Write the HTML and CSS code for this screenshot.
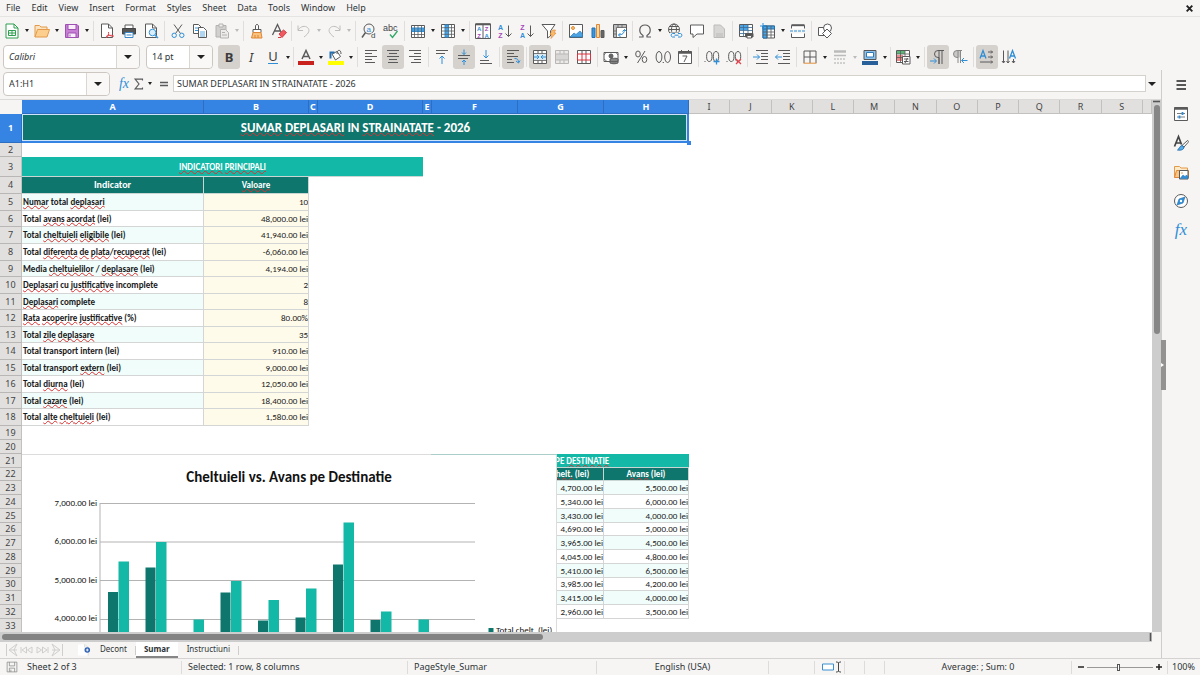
FILE: index.html
```html
<!DOCTYPE html>
<html lang="ro">
<head>
<meta charset="utf-8">
<title>Sumar deplasari</title>
<link rel="stylesheet" href="styles.css">
</head>
<body>
<nav class="menubar" aria-label="Menu">
<button>File</button><button>Edit</button><button>View</button><button>Insert</button><button>Format</button><button>Styles</button><button>Sheet</button><button>Data</button><button>Tools</button><button>Window</button><button>Help</button>
<button class="close" aria-label="Close document"><svg class="x" viewBox="0 0 8 8"><path d="M1.5 1.5l5 5M6.500 1.500l-5 5"/></svg></button>
</nav>

<div class="toolbar" role="toolbar" aria-label="Standard">
<button class="tb" aria-label="New"><svg class="i" viewBox="0 0 16 16"><path d="M2 1h8l4 4v10H2z" stroke="#2f9e4f" fill="#fff"/><path d="M10 1v4h4" stroke="#2f9e4f"/><path d="M4.500 7.500h7v5h-7zM4.500 10h7M8 7.500v5" stroke="#2f9e4f"/></svg></button><button class="dd" aria-label="New options"></button>
<button class="tb" aria-label="Open"><svg class="i" viewBox="0 0 16 16"><path d="M1 14V2.500h4.500L7 4h6v3" stroke="#e39a4a" fill="#fbe3c0"/><path d="M3.500 6.500h12L13 14H1z" stroke="#e39a4a" fill="#fdcf8f"/></svg></button><button class="dd" aria-label="Open options"></button>
<button class="tb" aria-label="Save"><svg class="i" viewBox="0 0 16 16"><path d="M1.500 1.500h11.500l1.500 1.500v11.500h-13z" stroke="#a04fb3" fill="#c77fd6"/><path d="M4 1.500h8v5H4zM4 10h8v4.500H4z" stroke="#a04fb3" fill="#f8effa"/><path d="M6 11.500v2" stroke="#a04fb3"/></svg></button><button class="dd" aria-label="Save options"></button>
<span class="sep"></span>
<button class="tb" aria-label="Export PDF"><svg class="i" viewBox="0 0 16 16"><path d="M2.500 1h7l4 4v9.500h-11z" fill="#fff"/><path d="M9.500 1v4h4"/><path d="M7 15c2-2 3-4 2.500-6M9 11c2 2 4 2.500 6 2M7 13.500c2-1 5-1.500 7-1" stroke="#e2454e"/></svg></button>
<button class="tb" aria-label="Print"><svg class="i" viewBox="0 0 16 16"><path d="M4 5V2h8v3" fill="#fff"/><path d="M1.500 5.500h13V11h-13z" fill="#555" stroke="#444"/><path d="M4 9.500h8v5H4z" fill="#fff" stroke="#3b87c8"/><path d="M5.500 12h5" stroke="#3b87c8"/></svg></button>
<button class="tb" aria-label="Print preview"><svg class="i" viewBox="0 0 16 16"><path d="M2.500 1h7l4 4v9.500h-11z" fill="#fff"/><path d="M9.500 1v4h4"/><circle cx="9.500" cy="9.500" r="3.300" stroke="#3b97dc" fill="#d9edfb"/><path d="M12 12l3 3" stroke="#3b97dc" stroke-width="1.500"/></svg></button>
<span class="sep"></span>
<button class="tb" aria-label="Cut"><svg class="i" viewBox="0 0 16 16"><path d="M4 1.500l6.500 9M12 1.500l-6.500 9"/><circle cx="4.200" cy="12.300" r="2.200" stroke="#2f8ed6"/><circle cx="11.800" cy="12.300" r="2.200" stroke="#2f8ed6"/></svg></button>
<button class="tb" aria-label="Copy"><svg class="i" viewBox="0 0 16 16"><path d="M1.500 1.500h5l2.500 2.500v6.500H1.500z" fill="#fff"/><path d="M3 5h4M3 7.500h4" stroke="#3b97dc"/><path d="M6.500 4.500h5l3 3v7h-8z" fill="#fff"/><path d="M8 9h5M8 11h5M8 13h5" stroke="#3b97dc" stroke-width=".8"/></svg></button>
<button class="tb" aria-label="Paste" disabled><svg class="i" viewBox="0 0 16 16"><path d="M2 2.500h10v11.500H2z" fill="#d2d0ce" stroke="#b4b2b0"/><path d="M5 1h4v3H5z" fill="#eee" stroke="#b4b2b0"/><path d="M6.500 6.500h5l3 3v5.500h-8z" fill="#ecebea" stroke="#b4b2b0"/><path d="M8 9.500h3M8 12h5" stroke="#b4b2b0"/></svg></button><button class="dd off" aria-label="Paste options" disabled></button>
<span class="sep"></span>
<button class="tb" aria-label="Clone formatting"><svg class="i" viewBox="0 0 16 16"><path d="M6.500 6.500V2.500q1.500-2.500 3 0v4" fill="#fff"/><path d="M4 6.500h8v3H4z" fill="#fff"/><path d="M4 9.500h8l1 5.500H2.500z" fill="#f9c27f" stroke="#df8636"/><path d="M6 12v3M9 12v3" stroke="#df8636"/></svg></button>
<button class="tb" aria-label="Clear formatting"><svg class="i" viewBox="0 0 16 16"><path d="M1.500 12L6.500 1.500 10 9M3.500 8h6" stroke-width="1.300"/><path d="M8 11l4.500-4 3 2.500-4.500 5z" fill="#ee5a5f" stroke="#d63b45"/><path d="M7 14.500h3" stroke="#d63b45"/></svg></button>
<span class="sep tight"></span>
<button class="tb" aria-label="Undo" disabled><svg class="i" viewBox="0 0 16 16"><path d="M2 2.500v5h5M2 7c3-4 7-4.500 9.500-2.500 2.500 2.500 2 5.500-3.500 9.500" stroke="#c0bebc"/></svg></button><button class="dd off" aria-label="Undo list" disabled></button>
<button class="tb" aria-label="Redo" disabled><svg class="i" viewBox="0 0 16 16"><path d="M14 2.500v5H9M14 7c-3-4-7-4.500-9.500-2.500C2 7 2.500 10 8 14" stroke="#c0bebc"/></svg></button><button class="dd off" aria-label="Redo list" disabled></button>
<span class="sep"></span>
<button class="tb" aria-label="Find and replace"><svg class="i" viewBox="0 0 16 16"><circle cx="8" cy="6" r="5"/><path d="M4.500 9.500L1 14.500" stroke-width="1.500"/><text x="5.500" y="8.500" class="t8 blue">a</text><text x="10" y="15" class="t8 halo">d</text></svg></button>
<button class="tb" aria-label="Spelling"><svg class="i" viewBox="0 0 16 16"><text x="0" y="7.500" class="t9">abc</text><path d="M7 11.500l2.500 3 5-6.500" stroke="#2fa866" stroke-width="1.300"/></svg></button>
<span class="sep"></span>
<button class="tb" aria-label="Rows"><svg class="i" viewBox="0 0 16 16"><path d="M1.500 2.500h13v12h-13z" fill="#fff"/><path d="M2 5h12v3.500H2z" fill="#4aa3e2" stroke="#2f8ed6"/><path d="M4.500 2.500v12M8 2.500v12M11.500 2.500v12M1.500 11.500h13" stroke-width=".8"/></svg></button><button class="dd" aria-label="Row options"></button>
<button class="tb" aria-label="Columns"><svg class="i" viewBox="0 0 16 16"><path d="M1.500 1.500h13v13h-13z" fill="#fff"/><path d="M5 2h3.500v12H5z" fill="#4aa3e2" stroke="#2f8ed6"/><path d="M11.500 1.500v13M1.500 4.700h13M1.500 8h13M1.500 11.300h13" stroke-width=".8"/></svg></button><button class="dd" aria-label="Column options"></button>
<span class="sep"></span>
<button class="tb" aria-label="Sort"><svg class="i" viewBox="0 0 16 16"><path d="M.5 1h15v14.500H.5zM8 1v14.500" fill="#fff"/><path d="M.5 1.300h15" stroke-width="2"/><text x="2" y="8" class="t6 blue">A</text><text x="2.300" y="15" class="t6 pur">Z</text><text x="9.800" y="8" class="t6 pur">Z</text><text x="9.500" y="15" class="t6 blue">A</text></svg></button>
<button class="tb" aria-label="Sort ascending"><svg class="i" viewBox="0 0 16 16"><text x="1" y="6.500" class="t7 blue">A</text><text x="1.300" y="15" class="t7 pur">Z</text><path d="M11.500 2.500v11M8.500 10.500l3 3 3-3"/></svg></button>
<button class="tb" aria-label="Sort descending"><svg class="i" viewBox="0 0 16 16"><text x="1.300" y="6.500" class="t7 pur">Z</text><text x="1" y="15" class="t7 blue">A</text><path d="M11.500 2.500v11M8.500 10.500l3 3 3-3"/></svg></button>
<button class="tb" aria-label="AutoFilter"><svg class="i" viewBox="0 0 16 16"><path d="M1 1.500h13L9.500 8v5l-3 2V8z" fill="#fff"/><path d="M11.500 7h3l-1.500 3h2L10 15.500l1-4H9z" fill="#fbbd6b" stroke="#e2903b" stroke-width=".7"/></svg></button>
<span class="sep"></span>
<button class="tb" aria-label="Insert image"><svg class="i" viewBox="0 0 16 16"><path d="M1.500 1.500h13v13h-13z" fill="#fff"/><circle cx="5" cy="5" r="1.500" fill="#fbbd6b" stroke="#e2903b"/><path d="M2 14l4-4 2 1.500 4-3.500 2.500 3v3z" fill="#4aa3e2" stroke="#2f78b8" stroke-width=".7"/></svg></button>
<button class="tb" aria-label="Insert chart"><svg class="i" viewBox="0 0 16 16"><path d="M2 5h3v9.500H2z" fill="#3b97dc" stroke="#246fb0"/><path d="M6.500 1.500h3v13h-3z" fill="#fcd9a5" stroke="#df8636"/><path d="M11 7.500h3v7h-3z" fill="#666"/></svg></button>
<button class="tb" aria-label="Insert pivot table"><svg class="i" viewBox="0 0 16 16"><path d="M1.500 1.500h13v13h-13z" fill="#fff"/><path d="M2 2h12v2.500H4.500V14H2z" fill="#bbb" stroke="none"/><path d="M4.500 14.500v-10h10M6 1.500v3M10 1.500v3M1.500 8h3M1.500 11h3" stroke-width=".8"/><path d="M6.500 12c4 0 6-2 6-5.500M10.500 8.500l2-2 2 2M8.500 10l-2 2 2 2" stroke="#2f8ed6"/></svg></button>
<span class="sep tight"></span>
<button class="tb" aria-label="Special character"><svg class="i" viewBox="0 0 16 16"><path d="M2 14h4v-1.500C1 9.500 2 2 8 2s7 7.500 2 10.500V14h4" stroke-width="1.200"/></svg></button><button class="dd" aria-label="Recent characters"></button>
<button class="tb" aria-label="Hyperlink"><svg class="i" viewBox="0 0 16 16"><circle cx="7" cy="6.500" r="5.500"/><ellipse cx="7" cy="6.500" rx="2.500" ry="5.500"/><path d="M1.500 6.500h11M2.500 3.500h9M2.500 9.500h9"/><path d="M3 9.500h13V15H3z" fill="#f6f5f4" stroke="none"/><path d="M8 10.500H5.500a1.800 1.800 0 000 3.500H8M11 10.500h2.500a1.800 1.800 0 010 3.500H11M7.500 12.200h4" stroke="#2f8ed6"/></svg></button>
<button class="tb" aria-label="Comment"><svg class="i" viewBox="0 0 16 16"><path d="M1.500 2h13v9H8l-4 3.500V11H1.500z" fill="#fff"/></svg></button>
<button class="tb" aria-label="Headers and footers" disabled><svg class="i" viewBox="0 0 16 16"><path d="M3 2h6.500l4 4v8.500H3z" fill="#d8d6d4" stroke="#bdbbb9"/><path d="M5 11h7M5 13h7" stroke="#bdbbb9"/></svg></button>
<span class="sep"></span>
<button class="tb" aria-label="Print area"><svg class="i" viewBox="0 0 16 16"><path d="M1.500 1.500h13v12h-13z" fill="#fff"/><path d="M2 2h8v5H2z" fill="#4aa3e2" stroke="none"/><path d="M1.500 4.500h13M1.500 7.500h13M1.500 10.500h13M5.500 1.500v12M10 1.500v12" stroke="#3a6b94" stroke-width=".8"/><path d="M7.500 10.500h7.500V14H7.500z" fill="#555"/><path d="M9 12.500h4.500V15H9z" fill="#fff"/></svg></button>
<button class="tb" aria-label="Freeze panes"><svg class="i" viewBox="0 0 16 16"><path d="M3 3h11.500v12H3z" fill="#fff"/><path d="M3 3h11.500v3H3zM3 3h4v12H3z" fill="#4aa3e2" stroke="#2370ac"/><path d="M3 9h11.500M3 12h11.500M7 3v12M11 3v12" stroke-width=".8"/><path d="M3 0v6M0 3h6" stroke="#2f8ed6"/></svg></button><button class="dd" aria-label="Freeze options"></button>
<button class="tb" aria-label="Split window"><svg class="i" viewBox="0 0 16 16"><path d="M1.500 5.500v-3h13v3M1.500 10.500v4h13v-4" fill="#fff"/><path d="M1.500 2.200h13" stroke-width="2"/><path d="M0 8h16" stroke="#2f8ed6" stroke-dasharray="3 1"/></svg></button>
<span class="sep"></span>
<button class="tb" aria-label="Draw functions"><svg class="i" viewBox="0 0 16 16"><path d="M1.500 4.500h8v8h-8z" fill="#fff"/><circle cx="10.500" cy="5" r="4" fill="#fff"/><path d="M10 6l4.500 4.500L10 15l-4.500-4.500z" fill="#fff"/></svg></button>
</div>

<div class="toolbar format" role="toolbar" aria-label="Formatting">
<div class="combo font"><input aria-label="Font name" value="Calibri"><button aria-label="Font list"></button></div>
<div class="combo size"><input aria-label="Font size" value="14 pt"><button aria-label="Size list"></button></div>
<button class="tb on" aria-label="Bold"><span class="g b">B</span></button>
<button class="tb" aria-label="Italic"><span class="g it">I</span></button>
<button class="tb" aria-label="Underline"><span class="g u">U</span></button><button class="dd" aria-label="Underline options"></button>
<span class="sep tight"></span>
<button class="tb" aria-label="Font color"><svg class="i" viewBox="0 0 16 16"><path d="M4 10L8 1.500 12 10M5.500 7.500h5" stroke-width="1.500"/><path d="M0 12h16v4H0z" fill="#c9211e" stroke="none"/></svg></button><button class="dd" aria-label="Font color options"></button>
<button class="tb" aria-label="Background color"><svg class="i" viewBox="0 0 16 16"><path d="M4 5l5-2.500 3.500 5-5 3.500z" fill="#fff"/><path d="M9 5c0-5 4-5 4 0"/><path d="M2.500 9.500V3.500h4" stroke="#246fb0" stroke-width="2"/><path d="M0 12h16v4H0z" fill="#ff0" stroke="none"/></svg></button><button class="dd" aria-label="Background color options"></button>
<span class="sep"></span>
<button class="tb" aria-label="Align left"><svg class="i" viewBox="0 0 16 16"><path d="M2 1.500h12M2 4.500h7M2 7.500h12M2 10.500h7M2 13.500h10"/></svg></button>
<button class="tb on" aria-label="Center"><svg class="i" viewBox="0 0 16 16"><path d="M2 1.500h12M4 4.500h8M2 7.500h12M4 10.500h8M3 13.500h10"/></svg></button>
<button class="tb" aria-label="Align right"><svg class="i" viewBox="0 0 16 16"><path d="M2 1.500h12M7 4.500h7M2 7.500h12M7 10.500h7M4 13.500h10"/></svg></button>
<span class="sep"></span>
<button class="tb" aria-label="Align top"><svg class="i" viewBox="0 0 16 16"><path d="M2 1.500h12M2 4.500h9"/><path d="M8 15V7M5.500 9.500L8 7l2.500 2.500" stroke="#2f8ed6"/></svg></button>
<button class="tb on" aria-label="Center vertically"><svg class="i" viewBox="0 0 16 16"><path d="M2 6.500h12M2 9.500h10"/><path d="M8 .5v5M6 3.500l2 2 2-2M8 16v-5M6 13l2-2 2 2" stroke="#2f8ed6"/></svg></button>
<button class="tb" aria-label="Align bottom"><svg class="i" viewBox="0 0 16 16"><path d="M2 11.500h9M2 14.500h12"/><path d="M8 1v8M5.500 6.500L8 9l2.500-2.500" stroke="#2f8ed6"/></svg></button>
<span class="sep"></span>
<button class="tb on" aria-label="Wrap text"><svg class="i" viewBox="0 0 16 16"><path d="M2 1.500h12M2 4.500h7M2 7.500h11M2 10.500h5M2 13.500h7"/><path d="M9.500 9.500c3 0 4 1 4 4M11 12l2.500 2 1.500-2.500" stroke="#2f8ed6"/></svg></button>
<span class="sep"></span>
<button class="tb on" aria-label="Merge and center"><svg class="i" viewBox="0 0 16 16"><path d="M1.500 1.500h13v13h-13z" fill="#fff"/><path d="M1.500 4.700h13M1.500 11.300h13M6 1.500v3M10 1.500v3M6 11.500v3M10 11.500v3"/><path d="M2 5.500h12v5H2z" fill="#d5eafa" stroke="none"/><path d="M2 8h4.500M5 6l2 2-2 2M14 8H9.500M11 6L9 8l2 2" stroke="#2f8ed6"/></svg></button>
<button class="tb" aria-label="Merge cells" disabled><svg class="i" viewBox="0 0 16 16"><path d="M1.500 1.500h13v13h-13z" fill="#eceae8" stroke="#b9b7b5"/><path d="M1.500 5h13v6h-13z" fill="#d8d6d4" stroke="#b9b7b5"/><path d="M6 1.500V5M10 1.500V5M6 11v3.500M10 11v3.500" stroke="#b9b7b5"/></svg></button>
<button class="tb" aria-label="Unmerge cells"><svg class="i" viewBox="0 0 16 16"><path d="M1.500 1.500h13v13h-13z" fill="#fff"/><path d="M6 1.500V5M10 1.500V5M6 11v3.500M10 11v3.500"/><path d="M1.500 5h13v6h-13zM6 5v6M10 5v6" fill="#fff" stroke="#d9333f"/></svg></button>
<span class="sep"></span>
<button class="tb" aria-label="Currency"><svg class="i" viewBox="0 0 16 16"><path d="M1 12.500v-9h14v9z" fill="#fff"/><circle cx="8" cy="7" r="2" fill="#666"/><path d="M1 10l3 2.500M1 6l2-2.500M13 3.500L15 6" stroke-width=".8"/><path d="M7 10c2-1 8-1 8 0v4c-2 1-6 1-8 0z" fill="#888"/><path d="M7 12c2 1 6 1 8 0"/></svg></button><button class="dd" aria-label="Currency options"></button>
<button class="tb" aria-label="Percent"><svg class="i" viewBox="0 0 16 16"><ellipse cx="5" cy="5" rx="2.300" ry="3"/><ellipse cx="11.500" cy="10.500" rx="2.300" ry="3"/><path d="M12 2L4.500 14"/></svg></button>
<button class="tb" aria-label="Number"><svg class="i" viewBox="0 0 16 16"><ellipse cx="4" cy="8" rx="2.900" ry="5.500"/><ellipse cx="12.600" cy="8" rx="2.900" ry="5.500"/><path d="M7.700 13.500h1.200"/></svg></button>
<button class="tb" aria-label="Date"><svg class="i" viewBox="0 0 16 16"><path d="M1.500 2.500h13v12h-13z" fill="#fff"/><path d="M1.500 3.500h13" stroke-width="2.500"/><path d="M4.500 1v2M11.500 1v2M5.500 7H10l-3 6"/></svg></button>
<span class="sep"></span>
<button class="tb" aria-label="Add decimal place"><svg class="i" viewBox="0 0 16 16"><path d="M.5 12.500h1"/><ellipse cx="5.300" cy="7.500" rx="2.700" ry="5"/><ellipse cx="12" cy="7.500" rx="2.700" ry="5"/><path d="M12.500 9.500v6M9.500 12.500h6" stroke="#2f8ed6" stroke-width="1.300"/></svg></button>
<button class="tb" aria-label="Delete decimal place"><svg class="i" viewBox="0 0 16 16"><path d="M.5 12.500h1"/><ellipse cx="5.300" cy="7.500" rx="2.700" ry="5"/><ellipse cx="12" cy="7.500" rx="2.700" ry="5"/><path d="M10 10l5 5M15 10l-5 5" stroke="#e2454e" stroke-width="1.300"/></svg></button>
<span class="sep"></span>
<button class="tb" aria-label="Increase indent"><svg class="i" viewBox="0 0 16 16"><path d="M3 1.500h12M8 4.500h7M8 7.500h7M8 10.500h7M3 14.500h12"/><path d="M0 8h6.500M4 5.500L6.500 8 4 10.500" stroke="#2f8ed6"/></svg></button>
<button class="tb" aria-label="Decrease indent"><svg class="i" viewBox="0 0 16 16"><path d="M3 1.500h12M8 4.500h7M8 7.500h7M8 10.500h7M3 14.500h12"/><path d="M7 8H.5M3 5.500L.5 8 3 10.500" stroke="#2f8ed6"/></svg></button>
<span class="sep"></span>
<button class="tb" aria-label="Borders"><svg class="i" viewBox="0 0 16 16"><path d="M2 14V2h12v12M8 2v12M2 8h12"/><path d="M1.500 14.200h13" stroke="#e2903b"/></svg></button><button class="dd" aria-label="Border options"></button>
<button class="tb" aria-label="Border style" disabled><svg class="i" viewBox="0 0 16 16"><path d="M2 2.500h12" stroke="#bbb" stroke-width="2.500"/><path d="M2 6.500h12" stroke="#bbb" stroke-width="1.500"/><path d="M2 10h12M2 14h12" stroke="#aaa" stroke-dasharray="2 1"/></svg></button><button class="dd off" aria-label="Border style options" disabled></button>
<button class="tb" aria-label="Border color"><svg class="i" viewBox="0 0 16 16"><path d="M2 1.500h12v9H2z" fill="#8ec2eb" stroke="#555"/><path d="M4.500 3.500h7V8h-7z" fill="#fff" stroke="#2f78b8"/><path d="M0 12h16v4H0z" fill="#2a6099" stroke="none"/></svg></button><button class="dd" aria-label="Border color options"></button>
<span class="sep tight"></span>
<button class="tb" aria-label="Conditional formatting"><svg class="i" viewBox="0 0 16 16"><path d="M1.500 1.500h13v12h-13z" fill="#fff"/><path d="M2 2h8v3H2z" fill="#59b87a" stroke="none"/><path d="M2 6h6v6H2z" fill="#ef8a8c" stroke="none"/><path d="M1.500 5h13M1.500 8.500h13M5.500 1.500v12M10 1.500v12" stroke-width=".8"/><path d="M7.500 7.500h7.500V15H7.500z" fill="#fff"/><path d="M9 10h4.500M9 12.500h4.500M12.500 9l-2.500 5"/></svg></button><button class="dd" aria-label="Conditional options"></button>
<span class="sep"></span>
<button class="tb on" aria-label="Left to right"><svg class="i" viewBox="0 0 16 16"><path d="M14 1.500H8a3.500 3.500 0 000 7h1V15M9 1.500V15M12 1.500V15"/><path d="M0 12h6M4 9.500L6.500 12 4 14.500" stroke="#2f8ed6"/></svg></button>
<button class="tb" aria-label="Right to left"><svg class="i" viewBox="0 0 16 16"><path d="M9 1.500H5a3 3 0 000 7h1l3 0z" fill="#c9c7c5" stroke="none"/><path d="M10 1.500H5a3 3 0 000 7h1M6 1.500V14M8.500 1.500V14" stroke="#888"/><path d="M15.500 11.500H10M12 9l-2.500 2.500L12 14" stroke="#2f8ed6"/></svg></button>
<span class="sep"></span>
<button class="tb on" aria-label="Horizontal text"><svg class="i" viewBox="0 0 16 16"><path d="M1 9.500L4 1.500l3 8M2 7h4" stroke="#2f8ed6" stroke-width="1.300"/><path d="M9 3h4.500M12 1.500L13.500 3 12 4.500M9 8h4.500M12 6.500L13.500 8 12 9.500M1 13h12.500M12 11.500l1.500 1.500-1.500 1.500"/></svg></button>
<button class="tb" aria-label="Vertical text"><svg class="i" viewBox="0 0 16 16"><path d="M8.500 9.500l3-8 3 8M9.500 7h4" stroke="#2f8ed6" stroke-width="1.300"/><path d="M2.500 1.500v12.500M1 12l1.500 2L4 12M7 1.500v12.500M5.500 12L7 14l1.500-2M12.500 10v4M11 12l1.500 2 1.500-2"/></svg></button>
</div>

<div class="work">
<main class="main">
<div class="formula">
<div class="combo name"><input aria-label="Name box" value="A1:H1"><button aria-label="Name list"></button></div>
<button class="fx" aria-label="Function wizard">fx</button>
<button class="sum" aria-label="Select function"><svg class="i" viewBox="0 0 16 16"><path d="M12 4V2.500H3.500L8 8l-4.500 5.500H12V12" stroke-width="1.300"/></svg></button><button class="dd" aria-label="Function list"></button>
<button class="eq" aria-label="Formula"><svg class="i" viewBox="0 0 16 16"><path d="M4 6.500h8M4 9.500h8" stroke-width="1.600"/></svg></button>
<input class="line" aria-label="Input line" value="SUMAR DEPLASARI IN STRAINATATE - 2026">
<button class="dd big" aria-label="Expand formula bar"></button>
</div>

<div class="gridwrap">
<div class="cells">
<table class="sheet">
<colgroup><col class="rh"><col class="ca"><col class="cb"><col class="cc"><col class="cb"><col class="cc"><col class="cf"><col class="cf"><col class="ch"><col><col><col><col><col><col><col><col><col><col><col><col class="cc"></colgroup>
<thead><tr><th class="corner"></th><th class="s">A</th><th class="s">B</th><th class="s">C</th><th class="s">D</th><th class="s">E</th><th class="s">F</th><th class="s">G</th><th class="s">H</th><th>I</th><th>J</th><th>K</th><th>L</th><th>M</th><th>N</th><th>O</th><th>P</th><th>Q</th><th>R</th><th>S</th><th></th></tr></thead>
<tbody>
<tr class="r29"><th class="s">1</th><td class="title" colspan="8"><span class="w">SUMAR</span> <span class="w">DEPLASARI</span> IN <span class="w">STRAINATATE</span> - 2026</td><td colspan="12"></td></tr>
<tr class="r14"><th>2</th><td colspan="20"></td></tr>
<tr class="r20"><th>3</th><td class="band" colspan="4"><span class="w">INDICATORI</span> <span class="w">PRINCIPALI</span></td><td colspan="16"></td></tr>
<tr class="r17"><th>4</th><td class="head big">Indicator</td><td class="head"><span class="w">Valoare</span></td><td colspan="18"></td></tr>
<tr class="r17 alt"><th>5</th><td class="k"><span class="w">Numar</span> total <span class="w">deplasari</span></td><td class="v">10</td><td colspan="18"></td></tr>
<tr class="r16"><th>6</th><td class="k">Total <span class="w">avans</span> <span class="w">acordat</span> (lei)</td><td class="v">48,000.00 lei</td><td colspan="18"></td></tr>
<tr class="r17 alt"><th>7</th><td class="k">Total <span class="w">cheltuieli</span> <span class="w">eligibile</span> (lei)</td><td class="v">41,940.00 lei</td><td colspan="18"></td></tr>
<tr class="r17"><th>8</th><td class="k">Total <span class="w">diferenta</span> <span class="w">de</span> <span class="w">plata</span>/<span class="w">recuperat</span> (lei)</td><td class="v">-6,060.00 lei</td><td colspan="18"></td></tr>
<tr class="r16 alt"><th>9</th><td class="k">Media <span class="w">cheltuielilor</span> / <span class="w">deplasare</span> (lei)</td><td class="v">4,194.00 lei</td><td colspan="18"></td></tr>
<tr class="r17"><th>10</th><td class="k"><span class="w">Deplasari</span> cu <span class="w">justificative</span> incomplete</td><td class="v">2</td><td colspan="18"></td></tr>
<tr class="r16 alt"><th>11</th><td class="k"><span class="w">Deplasari</span> complete</td><td class="v">8</td><td colspan="18"></td></tr>
<tr class="r17"><th>12</th><td class="k"><span class="w">Rata</span> <span class="w">acoperire</span> <span class="w">justificative</span> (%)</td><td class="v">80.00%</td><td colspan="18"></td></tr>
<tr class="r16 alt"><th>13</th><td class="k">Total <span class="w">zile</span> <span class="w">deplasare</span></td><td class="v">35</td><td colspan="18"></td></tr>
<tr class="r17"><th>14</th><td class="k">Total transport intern (lei)</td><td class="v">910.00 lei</td><td colspan="18"></td></tr>
<tr class="r16 alt"><th>15</th><td class="k">Total transport <span class="w">extern</span> (lei)</td><td class="v">9,000.00 lei</td><td colspan="18"></td></tr>
<tr class="r17"><th>16</th><td class="k">Total <span class="w">diurna</span> (lei)</td><td class="v">12,050.00 lei</td><td colspan="18"></td></tr>
<tr class="r16 alt"><th>17</th><td class="k">Total <span class="w">cazare</span> (lei)</td><td class="v">18,400.00 lei</td><td colspan="18"></td></tr>
<tr class="r17"><th>18</th><td class="k">Total <span class="w">alte</span> <span class="w">cheltuieli</span> (lei)</td><td class="v">1,580.00 lei</td><td colspan="18"></td></tr>
<tr class="r14"><th>19</th><td colspan="20"></td></tr>
<tr class="r14"><th>20</th><td colspan="20"></td></tr>
<tr class="r14"><th>21</th><td colspan="5"></td><td class="band" colspan="3">CHELTUIELI PE <span class="w">DESTINATIE</span></td><td colspan="12"></td></tr>
<tr class="r13"><th>22</th><td colspan="5"></td><td class="head"></td><td class="head">Total <span class="w">chelt.</span> (lei)</td><td class="head"><span class="w">Avans</span> (lei)</td><td colspan="12"></td></tr>
<tr class="r14 alt"><th>23</th><td colspan="5"></td><td class="n"></td><td class="n">4,700.00 lei</td><td class="n">5,500.00 lei</td><td colspan="12"></td></tr>
<tr class="r14"><th>24</th><td colspan="5"></td><td class="n"></td><td class="n">5,340.00 lei</td><td class="n">6,000.00 lei</td><td colspan="12"></td></tr>
<tr class="r14 alt"><th>25</th><td colspan="5"></td><td class="n"></td><td class="n">3,430.00 lei</td><td class="n">4,000.00 lei</td><td colspan="12"></td></tr>
<tr class="r13"><th>26</th><td colspan="5"></td><td class="n"></td><td class="n">4,690.00 lei</td><td class="n">5,000.00 lei</td><td colspan="12"></td></tr>
<tr class="r14 alt"><th>27</th><td colspan="5"></td><td class="n"></td><td class="n">3,965.00 lei</td><td class="n">4,500.00 lei</td><td colspan="12"></td></tr>
<tr class="r14"><th>28</th><td colspan="5"></td><td class="n"></td><td class="n">4,045.00 lei</td><td class="n">4,800.00 lei</td><td colspan="12"></td></tr>
<tr class="r14 alt"><th>29</th><td colspan="5"></td><td class="n"></td><td class="n">5,410.00 lei</td><td class="n">6,500.00 lei</td><td colspan="12"></td></tr>
<tr class="r13"><th>30</th><td colspan="5"></td><td class="n"></td><td class="n">3,985.00 lei</td><td class="n">4,200.00 lei</td><td colspan="12"></td></tr>
<tr class="r14 alt"><th>31</th><td colspan="5"></td><td class="n"></td><td class="n">3,415.00 lei</td><td class="n">4,000.00 lei</td><td colspan="12"></td></tr>
<tr class="r14"><th>32</th><td colspan="5"></td><td class="n"></td><td class="n">2,960.00 lei</td><td class="n">3,500.00 lei</td><td colspan="12"></td></tr>
<tr class="r14"><th>33</th><td colspan="20"></td></tr>
</tbody>
</table>
<svg class="chart" viewBox="0 0 535 180" role="img" aria-label="Cheltuieli vs. Avans pe Destinatie">
<path d="M0 0h535v180H0z" fill="#fff"/><path d="M0 .5h534.500V180" fill="none" stroke="#dcdcdc"/><path d="M409 .5h126" stroke="#a9cfc8"/>
<text class="ct" x="267" y="28">Cheltuieli vs. Avans pe Destinatie</text>
<path d="M78 49.500h375M78 88h375M78 126.500h375M78 165.500h375M78 49v131" fill="none" stroke="#b3b3b3"/>
<g class="ax"><text x="75" y="52">7,000.00 lei</text><text x="75" y="90">6,000.00 lei</text><text x="75" y="129">5,000.00 lei</text><text x="75" y="167">4,000.00 lei</text></g>
<path fill="#0f766e" d="M86 138h10v42H86zM123.500 113.500h10V180h-10zM198.500 138.500h10V180h-10zM236 166.500h10V180h-10zM273.500 163.500h10V180h-10zM311 110.500h10V180h-10zM348.500 166h10V180h-10z"/>
<path fill="#14b8a6" d="M96.500 107.500h10.500V180H96.500zM134 88h10.500v92H134zM171.500 165.500H182V180h-10.500zM209 127h10.500v53H209zM246.500 146H257v34h-10.500zM284 134.500h10.500V180H284zM321.500 68.500H332V180h-10.500zM359 157.500h10.500V180H359zM396.500 165.500H407V180h-10.500z"/>
<path fill="#0f766e" d="M466.500 174h5v5h-5z"/><text class="lg" x="474" y="179">Total chelt. (lei)</text>
</svg>
</div>
<div class="vscroll"><span class="tick"></span><span class="thumb"></span></div>
</div>
<div class="hscroll"><span class="thumb"></span><span class="tick"></span></div>

<div class="tabs">
<div class="tabnav">
<button aria-label="First sheet" disabled><svg viewBox="0 0 14 14"><path d="M1.500 1v12M12 1L4 7l8 6-3-6zM5 7h7"/></svg></button>
<button aria-label="Previous sheet" disabled><svg viewBox="0 0 14 14"><path d="M6.500 4L2 7l4.500 3zM12 4L7.500 7l4.500 3zM1 4v6"/></svg></button>
<button aria-label="Next sheet" disabled><svg viewBox="0 0 14 14"><path d="M2 4l4.500 3L2 10zM7.500 4L12 7l-4.500 3zM13 4v6"/></svg></button>
<button aria-label="Last sheet" disabled><svg viewBox="0 0 14 14"><path d="M12.500 1v12M2 1l8 6-8 6 3-6zM2 7h7"/></svg></button>
</div>
<button class="add" aria-label="Add sheet"><svg viewBox="0 0 14 14"><path d="M0 1h7l4 3v9H0z" fill="#fff"/><path d="M7 1l4 3v9M7 1v3h4" fill="none" stroke="#ddd"/><circle cx="10" cy="7" r="3" fill="#2f62b5"/><path d="M10 5.500v3M8.500 7h3" stroke="#fff"/></svg></button>
<button class="tab">Decont</button><button class="tab cur">Sumar</button><button class="tab">Instructiuni</button>
</div>
</main>

<aside class="side">
<button aria-label="Sidebar settings"><svg class="i" viewBox="0 0 16 16"><path d="M3.500 4h9.500M3.500 8h9.500M3.500 12h9.500" stroke="#222" stroke-width="1.400"/></svg></button>
<button aria-label="Properties"><svg class="i" viewBox="0 0 16 16"><path d="M1.500 1.500h13v13h-13z" fill="#fff"/><path d="M1.500 2.500h13" stroke-width="2.500"/><path d="M4 7.500h8M4 11h8" stroke-width=".8"/><path d="M9.500 6v3M6.500 9.500v3" stroke="#2f8ed6" stroke-width="1.800"/></svg></button>
<button aria-label="Styles"><svg class="i" viewBox="0 0 16 16"><path d="M1.500 11.500L5.500 1.500l3 8M3 8h5" stroke="#444" stroke-width="1.700"/><path d="M14.500 5.500c1 0 1 1 .5 2l-4 4.500-2-1.500z" fill="#fff"/><path d="M9 10.500l2 1.500c0 3-4 3.500-6.500 3 2-1 2-4 4.500-4.500z" fill="#58aee8" stroke="#246fb0"/></svg></button>
<button aria-label="Gallery"><svg class="i" viewBox="0 0 16 16"><path d="M1.500 13.500v-11h5L8 4h6.500v3" fill="#fdeacb" stroke="#e39a4a"/><path d="M1.500 13.500l2-7h12v7z" fill="#fbc583" stroke="#df8636"/><path d="M6.500 6.500h8.500V15H6.500z" fill="#fff"/><path d="M7 14.500l3-3.500 2 1.500 1.500-1.500 1.500 1.500v2z" fill="#2f8ed6" stroke="#246fb0" stroke-width=".5"/><circle cx="9" cy="9" r=".8" fill="#e2903b" stroke="none"/></svg></button>
<button aria-label="Navigator"><svg class="i" viewBox="0 0 16 16"><circle cx="8" cy="8" r="6.500" fill="#fff"/><path d="M12 4l-2 6-6 2 2-6z" fill="#2f8ed6" stroke="#246fb0" stroke-width=".6"/><circle cx="8" cy="8" r="1.200" fill="#fff" stroke="none"/></svg></button>
<button class="fx" aria-label="Functions">fx</button>
<button class="grip" aria-label="Hide sidebar"></button>
</aside>
</div>

<footer class="status">
<span class="doc"><svg class="i sm" viewBox="0 0 16 16"><path d="M1.500 1.500h13v13h-13zM4.500 1.500v5h7v-5M4.500 14.500v-5h7v5M6.500 11.500v3" stroke="#888"/></svg>Sheet 2 of 3</span>
<span>Selected: 1 row, 8 columns</span><span>PageStyle_Sumar</span><span class="c">English (USA)</span><span></span>
<span class="mode"><svg viewBox="0 0 22 12"><path d="M1.500 3h11v6h-11z" fill="#fff" stroke="#3b8fd0"/><path d="M15 1h1.500l1 1 1-1H20M17.500 2v8M15 11h1.500l1-1 1 1H20" fill="none" stroke="#444"/></svg></span>
<span></span><span></span><span class="c">Average: ; Sum: 0</span>
<span class="zoom"><button aria-label="Zoom out"><svg viewBox="0 0 8 8"><path d="M1 4h6"/></svg></button><input type="range" aria-label="Zoom" min="0" max="100" value="48"><button aria-label="Zoom in"><svg viewBox="0 0 8 8"><path d="M1 4h6M4 1v6"/></svg></button></span>
<span class="pct">100%</span>
</footer>
</body>
</html>
```

FILE: styles.css
```css
* { box-sizing: border-box; }
html, body { height: 100%; }
body {
  margin: 0; display: flex; flex-direction: column; overflow: hidden;
  background: #f6f5f4; color: #2e3436;
  font: 9px/12px "Noto Sans", sans-serif;
}
button, input { font: inherit; color: inherit; background: none; border: 0; margin: 0; padding: 0; }
svg { display: block; }

.menubar { display: flex; align-items: center; gap: 11px; height: 17px; padding: 0 6px; border-bottom: 1px solid #e6e4e2; }
.close { margin-left: auto; }
.x { width: 9px; height: 9px; fill: none; stroke: #222; stroke-width: 1.7; }

.toolbar { display: flex; align-items: center; height: 27px; padding-left: 1px; }
.toolbar.format { height: 26px; padding-left: 3px; }
.tb { display: flex; align-items: center; justify-content: center; flex: none; width: 22px; height: 24px; border-radius: 3px; }
.tb.on { background: #d5d1cd; }
.i { width: 16px; height: 16px; overflow: visible; fill: none; stroke: #5a5a5a; stroke-width: 1; }
.i text { stroke: none; fill: #444; font-family: "Liberation Sans", sans-serif; }
.i text.blue { fill: #2f8ed6; }
.i text.pur { fill: #a447b8; }
.i text.halo { stroke: #f6f5f4; stroke-width: 2; paint-order: stroke; }
.t9 { font-size: 9px; }
.t8 { font-size: 8px; }
.t7 { font-size: 7px; font-weight: 700; }
.t6 { font-size: 6px; font-weight: 700; }
.dd { display: flex; align-items: center; justify-content: center; flex: none; width: 8px; height: 22px; }
.dd::after, .combo button::after { content: ""; border: 3px solid transparent; border-top: 3px solid #222; border-bottom: 0; }
.dd::after { border-width: 3px 2px 0; }
.dd.off::after { border-top-color: #bbb; }
.dd.big::after, .combo button::after { border-width: 4px 4px 0; }
.sep { flex: none; width: 1px; height: 20px; margin: 0 2px; background: #e0dedc; }
.sep.tight { margin: 0 1px; }
.g { font-size: 13px; line-height: 16px; color: #3c3c3c; }
.g.b { font-weight: 700; }
.g.it { font-style: italic; }
.g.u { border-bottom: 1px solid #2f8ed6; line-height: 13px; }

.combo { display: flex; flex: none; height: 24px; background: #fff; border: 1px solid #cdc7c2; border-radius: 4px; }
.combo input { flex: 1; min-width: 0; padding-left: 5px; }
.combo button { display: flex; align-items: center; justify-content: center; width: 23px; border-left: 1px solid #dad6d2; background: #f9f8f7; border-radius: 0 4px 4px 0; }
.font { width: 137px; margin-right: 6px; }
.font input { font-style: italic; }
.size { width: 67px; margin-right: 5px; }
.name { width: 107px; margin-right: 6px; }

.work { display: flex; flex: 1; min-height: 0; }
.main { display: flex; flex-direction: column; flex: 1; min-width: 0; }
.formula { display: flex; align-items: center; height: 30px; padding: 0 5px 2px 3px; border-bottom: 1px solid #dcdad8; }
.fx { width: 16px; font: italic 14px/16px "Liberation Serif", serif; color: #2f8ed6; }
.sum { width: 14px; }
.sum .i { width: 14px; }
.eq { margin: 0 1px 0 2px; }
.line { flex: 1; min-width: 0; height: 17px; padding-left: 3px; margin-right: 2px; background: #fff; border: 1px solid #d5d1cd; }

.gridwrap { display: flex; flex: 1; min-height: 0; }
.cells { position: relative; flex: 1; min-width: 0; overflow: hidden; background: #fff; }
.sheet { width: 100%; table-layout: fixed; border-collapse: separate; border-spacing: 0; color: #1a1a1a; font: 9px/10px Carlito, Lato, sans-serif; }
.sheet th, .sheet td { padding: 0; white-space: nowrap; overflow: hidden; }
.sheet th { background: #e1e0df; color: #444; border-right: 1px solid #c3c1bf; border-bottom: 1px solid #c3c1bf; font: 9px/12px "Noto Sans", sans-serif; }
.sheet thead th { height: 14px; }
.sheet tbody th { border-bottom-color: #b9b7b5; }
.sheet th.s { background: #3584e4; color: #fff; font-weight: 700; border-color: #2c6fc2; }
.sheet th.corner { background: #f6f5f4; border-color: #f6f5f4; }
.rh { width: 22px; }
.ca { width: 182px; }
.cb { width: 105px; }
.cc { width: 9px; }
.cf { width: 86px; }
.ch { width: 85px; }
.r29 { height: 29px; }
.r20 { height: 20px; }
.r17 { height: 17px; }
.r16 { height: 16px; }
.r14 { height: 14px; }
.r13 { height: 13px; }
.sheet td.title { position: relative; overflow: visible; background: #0f766e; color: #fff; font-size: 13px; font-weight: 700; line-height: 14px; padding-bottom: 2px; text-align: center; }
.title::before { content: ""; position: absolute; inset: 0; border: 2px solid #3584e4; border-width: 0 2px 2px 0; box-shadow: inset 0 0 0 1px #cfe3fa; }
.title::after { content: ""; position: absolute; right: -2px; bottom: -2px; width: 4px; height: 4px; background: #3584e4; }
.band, .head { color: #fff; font-weight: 700; text-align: center; }
.band { background: #14b8a6; border-bottom: 1px solid #c9d6d4; }
.head { background: #0f766e; border-right: 1px solid #c9d6d4; border-bottom: 1px solid #c9d6d4; }
.head.big { font-size: 10px; }
.k, .v, .n { border-right: 1px solid #d3d6d5; border-bottom: 1px solid #d3d6d5; }
.k { font-weight: 700; }
.sheet td.k { padding-left: 1px; }
.v, .n { text-align: right; }
.alt .k, .alt .n { background: #f0fdfa; }
.sheet .v { background: #fffbeb; }
.w { text-decoration: underline wavy #dc3030 1px; text-underline-offset: 0; text-decoration-skip-ink: none; }
.chart { position: absolute; left: 22px; top: 354px; width: 535px; height: 180px; }
.chart text { font-family: Carlito, Lato, sans-serif; fill: #111; }
.chart .ct { font-size: 15px; font-weight: 700; text-anchor: middle; }
.chart .ax { font-size: 9px; text-anchor: end; }
.chart .lg { font-size: 9px; }

.vscroll { display: flex; flex-direction: column; align-items: center; width: 9px; background: #cdcdcd; }
.vscroll .tick { width: 7px; height: 3px; background: #555; border: 1px solid #aaa; border-width: 1px 0; }
.vscroll .thumb { width: 6px; height: 43%; margin-top: 2px; border-radius: 3px; background: #868686; }
.hscroll { display: flex; align-items: center; justify-content: space-between; height: 10px; margin-right: 9px; padding-left: 2px; background: #cdcdcd; }
.hscroll .thumb { width: 47%; height: 6px; border-radius: 3px; background: #828282; }
.hscroll .tick { width: 3px; height: 8px; background: #555; border: 1px solid #aaa; border-width: 0 1px; }

.tabs { display: flex; height: 16px; font-size: 8px; }
.tabnav { display: flex; align-items: center; width: 78px; padding-left: 5px; gap: 1px; }
.tabnav svg, .add svg { width: 14px; height: 14px; fill: none; stroke: #d0cecc; stroke-width: 1; }
.add { width: 13px; }
.add svg { width: 13px; stroke: none; }
.tab { padding: 0 9px 2px; background: linear-gradient(#cfcdcb, #cfcdcb) right / 1px 9px no-repeat; line-height: 12px; }
.tab.cur { padding: 0 8px; background: #fff; font-weight: 700; border-bottom: 2px solid #868686; }

.side { position: relative; display: flex; flex-direction: column; align-items: center; gap: 13px; width: 39px; padding: 7px 0 0; border-left: 1px solid #cfcdcb; }
.side .fx { font-size: 17px; }
.side .grip { position: absolute; left: -1px; top: 46%; width: 5px; height: 50px; background: #949290; }
.grip::after { content: ""; display: block; width: 3px; border: 2px solid transparent; border-left: 3px solid #fff; border-right: 0; }

.status { display: grid; grid-template-columns: 181fr 226fr 189fr 172fr 46fr 30px 20px 20px 187fr 96px 33px; align-items: center; height: 17px; border-top: 1px solid #d5d3d1; }
.status > span { display: flex; align-items: center; height: 13px; padding-left: 6px; border-left: 1px solid #dedcda; white-space: nowrap; }
.status > .doc { gap: 9px; border-left: 0; }
.status > .c { justify-content: center; padding: 0; }
.status > .pct { padding-left: 4px; }
.i.sm { width: 12px; height: 12px; }
.mode svg { width: 22px; height: 12px; }
.zoom svg { width: 8px; height: 8px; stroke: #222; stroke-width: 1.5; }
.zoom input { appearance: none; flex: 1; min-width: 0; height: 8px; margin: 0 2px; background: linear-gradient(#999, #999) center / 100% 1px no-repeat; }
.zoom input::-webkit-slider-thumb { appearance: none; width: 3px; height: 7px; border: 1px solid #555; background: #fff; }
.status > .zoom { padding: 0 4px 0 5px; }
```
